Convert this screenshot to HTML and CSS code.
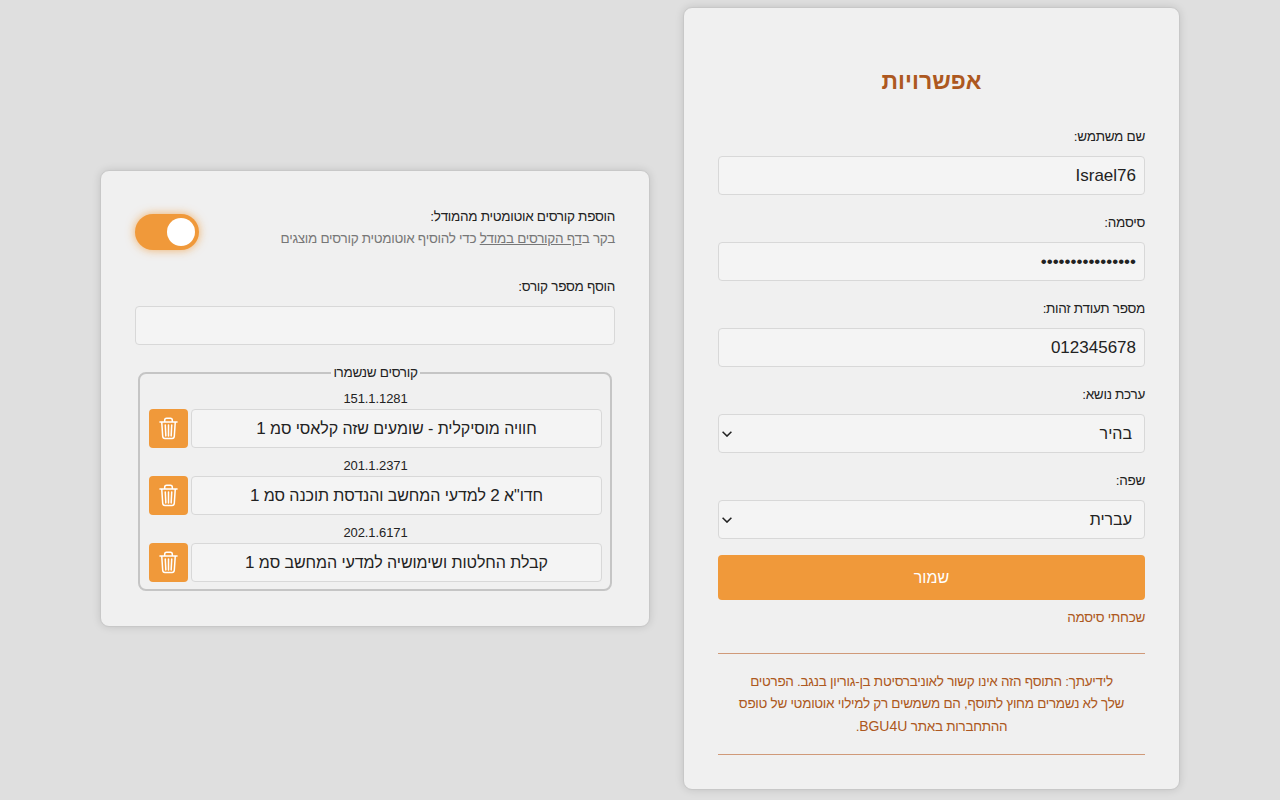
FILE: index.html
```html
<!DOCTYPE html>
<html lang="he" dir="rtl">
<head>
<meta charset="utf-8">
<title>אפשרויות</title>
<link rel="stylesheet" href="styles.css">
</head>
<body>
<svg class="sprite" aria-hidden="true">
  <symbol id="trash" viewBox="0 0 20 24">
    <path d="M1 5.2h18M6 5V3.2Q6 1.3 8 1.3h4q2 0 2 1.9V5M2.9 5.4l1 14.8q.2 2.3 2.3 2.3h7.6q2.1 0 2.3-2.3l1-14.8M6.6 8.3l.6 11.5M10 8.3v11.5M13.4 8.3l-.6 11.5"/>
  </symbol>
  <symbol id="chevron" viewBox="0 0 10 6"><path d="M.6.7 5 5.1 9.4.7"/></symbol>
</svg>
<main class="page">
  <section class="card options">
    <h1 class="title">אפשרויות</h1>
    <form class="fields">
      <div class="field"><label class="label" for="user">שם משתמש:</label><input class="input" id="user" type="text" value="Israel76"></div>
      <div class="field"><span class="label">סיסמה:</span><div class="input dots">••••••••••••••••</div></div>
      <div class="field"><label class="label" for="ident">מספר תעודת זהות:</label><input class="input" id="ident" type="text" value="012345678"></div>
      <div class="field"><span class="label">ערכת נושא:</span><div class="input select"><span>בהיר</span><svg class="chevron"><use href="#chevron"/></svg></div></div>
      <div class="field"><span class="label">שפה:</span><div class="input select"><span>עברית</span><svg class="chevron"><use href="#chevron"/></svg></div></div>
    </form>
    <button class="save" type="button">שמור</button>
    <a class="forgot">שכחתי סיסמה</a>
    <div class="notice">
      <span class="line">לידיעתך: התוסף הזה אינו קשור לאוניברסיטת בן-גוריון בנגב. הפרטים</span>
      <span class="line">שלך לא נשמרים מחוץ לתוסף, הם משמשים רק למילוי אוטומטי של טופס</span>
      <span class="line">ההתחברות באתר <span class="latin">BGU4U</span>.</span>
    </div>
  </section>
  <section class="card courses">
    <div class="auto">
      <div class="auto-text">
        <span class="line">הוספת קורסים אוטומטית מהמודל:</span>
        <span class="line hint">בקר ב<a class="link">דף הקורסים במודל</a> כדי להוסיף אוטומטית קורסים מוצגים</span>
      </div>
      <div class="toggle"><span class="knob"></span></div>
    </div>
    <div class="field add"><label class="label" for="course">הוסף מספר קורס:</label><input class="input" id="course" type="text"></div>
    <fieldset class="saved">
      <legend class="legend">קורסים שנשמרו</legend>
      <div class="course"><span class="number">151.1.1281</span><div class="row"><div class="input name">חוויה מוסיקלית - שומעים שזה קלאסי סמ <span class="digit">1</span></div><button class="delete" type="button"><svg class="trash"><use href="#trash"/></svg></button></div></div>
      <div class="course"><span class="number">201.1.2371</span><div class="row"><div class="input name">חדו"א <span class="digit">2</span> למדעי המחשב והנדסת תוכנה סמ <span class="digit">1</span></div><button class="delete" type="button"><svg class="trash"><use href="#trash"/></svg></button></div></div>
      <div class="course"><span class="number">202.1.6171</span><div class="row"><div class="input name">קבלת החלטות ושימושיה למדעי המחשב סמ <span class="digit">1</span></div><button class="delete" type="button"><svg class="trash"><use href="#trash"/></svg></button></div></div>
    </fieldset>
  </section>
</main>
</body>
</html>
```
FILE: styles.css
```css
* { box-sizing: border-box; }
body { margin: 0; background: #dfdfdf; color: #222; font: 13.5px/22px "Liberation Sans", sans-serif; letter-spacing: -.29px; }
.sprite { display: none; }
.page { height: 800px; overflow: hidden; display: flex; align-items: center; gap: 33px; padding: 0 100px 3px 0; }
.card { background: #f0f0f0; border: 1px solid #c8c8c8; border-radius: 9px; box-shadow: 0 0 8px rgba(0,0,0,.13); padding: 0 34px; flex: none; }
.options { width: 497px; height: 783px; padding-top: 57px; }
.courses { width: 550px; height: 457px; padding-top: 35px; }
.title { margin: 0; height: 32px; font-size: 23px; line-height: 32px; letter-spacing: 0; color: #ad5820; text-align: center; }
.fields { display: grid; gap: 17px; margin-top: 29px; }
.field { display: grid; grid-template-rows: 22px 39px; gap: 8px; }
.label { display: block; white-space: nowrap; }
.input { width: 100%; height: 39px; border: 1px solid #d8d8d8; border-radius: 4px; background: #f4f4f4; color: #222; padding: 0 8px; font: 17px/37px "Liberation Sans", sans-serif; letter-spacing: 0; }
.dots { white-space: nowrap; }
.select { display: flex; justify-content: space-between; align-items: center; padding: 0 12px 0 3px; font-size: 16px; }
.chevron { width: 10px; height: 6px; fill: none; stroke: #222; stroke-width: 1.5; }
.save { display: block; width: 100%; height: 45px; margin-top: 16px; padding: 0; border: 0; border-radius: 4px; background: #f0993a; color: #fff; font: 16px/45px "Liberation Sans", sans-serif; }
.forgot { display: block; margin-top: 7px; color: #ad5820; }
.notice { height: 102px; margin-top: 24px; border-top: 1px solid #d09a79; border-bottom: 1px solid #d09a79; padding-top: 17px; color: #ad5820; text-align: center; }
.line { display: block; white-space: nowrap; }
.latin { font-size: 14px; letter-spacing: 0; }
.auto { display: flex; justify-content: space-between; height: 44px; }
.hint { color: #777; }
.link { text-decoration: underline; }
.toggle { width: 64px; height: 36px; margin-top: 8px; border-radius: 18px; background: #f0993a; box-shadow: 0 0 10px rgba(240,153,58,.75); padding: 4px; display: flex; justify-content: flex-start; }
.knob { width: 28px; height: 28px; border-radius: 50%; background: #fff; }
.add { margin-top: 26px; }
.saved { margin: 17px 3px 0; height: 229px; border: 2px solid #c5c5c5; border-radius: 8px; padding: 0 8px 0 9px; }
.legend { margin: 0 auto; padding: 0 2px; }
.course { height: 67.2px; }
.number { display: block; height: 25px; line-height: 29px; font-size: 13px; letter-spacing: -.1px; text-align: center; }
.row { display: flex; gap: 3px; }
.name { width: auto; flex: 1; text-align: center; white-space: nowrap; font-size: 16px; letter-spacing: -.06px; }
.digit { font-size: 17px; }
.delete { width: 39px; height: 39px; padding: 0; border: 0; border-radius: 4px; background: #f0993a; display: grid; place-items: center; }
.trash { width: 19px; height: 23px; fill: none; stroke: #fff; stroke-width: 1.6; stroke-linecap: round; }
```
